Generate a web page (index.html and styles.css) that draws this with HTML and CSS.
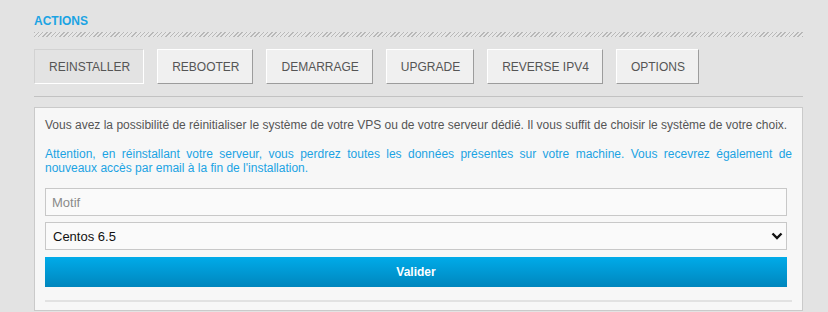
FILE: index.html
```html
<!DOCTYPE html>
<html lang="fr">
<head>
<meta charset="utf-8">
<link rel="stylesheet" href="styles.css">
</head>
<body>
<div class="wrap">
  <h2 class="title">ACTIONS</h2>
  <div class="hatch"></div>
  <div class="tabs">
    <button class="tab active">REINSTALLER</button>
    <button class="tab">REBOOTER</button>
    <button class="tab">DEMARRAGE</button>
    <button class="tab">UPGRADE</button>
    <button class="tab">REVERSE IPV4</button>
    <button class="tab">OPTIONS</button>
  </div>
  <div class="sep"></div>
  <div class="panel">
    <p class="info">Vous avez la possibilité de réinitialiser le système de votre VPS ou de votre serveur dédié. Il vous suffit de choisir le système de votre choix.</p>
    <p class="warn">Attention, en réinstallant votre serveur, vous perdrez toutes les données présentes sur votre machine. Vous recevrez également de nouveaux accès par email à la fin de l'installation.</p>
    <div class="form">
      <input class="field" type="text" placeholder="Motif">
      <div class="select-wrap">
        <select class="field select"><option>Centos 6.5</option></select>
        <svg class="chev" width="12" height="8" viewBox="0 0 12 8"><path d="M1.5 1.5 L6 6 L10.5 1.5" fill="none" stroke="#111" stroke-width="2.4"/></svg>
      </div>
      <button class="submit">Valider</button>
    </div>
    <div class="rule"></div>
  </div>
</div>
</body>
</html>
```
FILE: styles.css
```css
html, body { margin: 0; padding: 0; }
body {
  background: #e3e3e3;
  font-family: Arial, "Liberation Sans", sans-serif;
  color: #555;
  width: 828px;
  height: 312px;
  overflow: hidden;
}
.wrap {
  margin-left: 34px;
  width: 769px;
  padding-top: 14px;
}
.title {
  margin: 0;
  font-size: 12px;
  line-height: 14px;
  font-weight: bold;
  color: #1ba3e3;
}
.hatch {
  margin-top: 4px;
  height: 5px;
  background: repeating-linear-gradient(135deg, #b8b8b8 0 1px, #e6e6e6 1px 3px);
}
.tabs {
  display: flex;
  gap: 13px;
  margin-top: 12px;
}
.tab {
  height: 35px;
  padding: 0 13px 0 14px;
  font-family: Arial, "Liberation Sans", sans-serif;
  font-size: 12px;
  color: #555;
  background: #f0f0f0;
  border: 1px solid;
  border-color: #ffffff #9c9c9c #9c9c9c #ffffff;
  cursor: pointer;
}
.tab.active {
  background: #e3e3e3;
  border-color: #d2d2d2 #ffffff #ffffff #d2d2d2;
}
.sep {
  margin-top: 12px;
  border-top: 1px solid #c2c2c2;
}
.panel {
  margin-top: 10px;
  background: #f7f7f7;
  border: 1px solid #cacaca;
  padding: 10px 10px 0 10px;
  height: 192px;
}
.panel p {
  margin: 0;
  font-size: 12px;
  line-height: 14px;
  text-align: justify;
}
.info { margin-bottom: 15px !important; }
.warn { color: #1ba3e3; }
.form {
  margin-top: 13px;
  margin-right: 5px;
  display: flex;
  flex-direction: column;
}
.field {
  box-sizing: border-box;
  width: 100%;
  height: 28px;
  border: 1px solid #c8c8c8;
  background: #fafafa;
  font-family: Arial, "Liberation Sans", sans-serif;
  font-size: 13px;
  padding: 0 6px;
  outline: none;
  border-radius: 0;
}
.field::placeholder { color: #8a8a8a; }
.select-wrap {
  position: relative;
  margin-top: 6px;
}
.select {
  appearance: none;
  -webkit-appearance: none;
  color: #111;
  padding-left: 7px;
  display: block;
}
.chev {
  position: absolute;
  right: 4px;
  top: 10px;
  pointer-events: none;
}
.submit {
  margin-top: 7px;
  height: 30px;
  border: none;
  background: linear-gradient(#00abe9, #0086bd);
  color: #fff;
  font-family: Arial, "Liberation Sans", sans-serif;
  font-weight: bold;
  font-size: 12px;
  cursor: pointer;
}
.rule {
  margin-top: 13px;
  border-top: 2px solid #e2e2e2;
}
```
